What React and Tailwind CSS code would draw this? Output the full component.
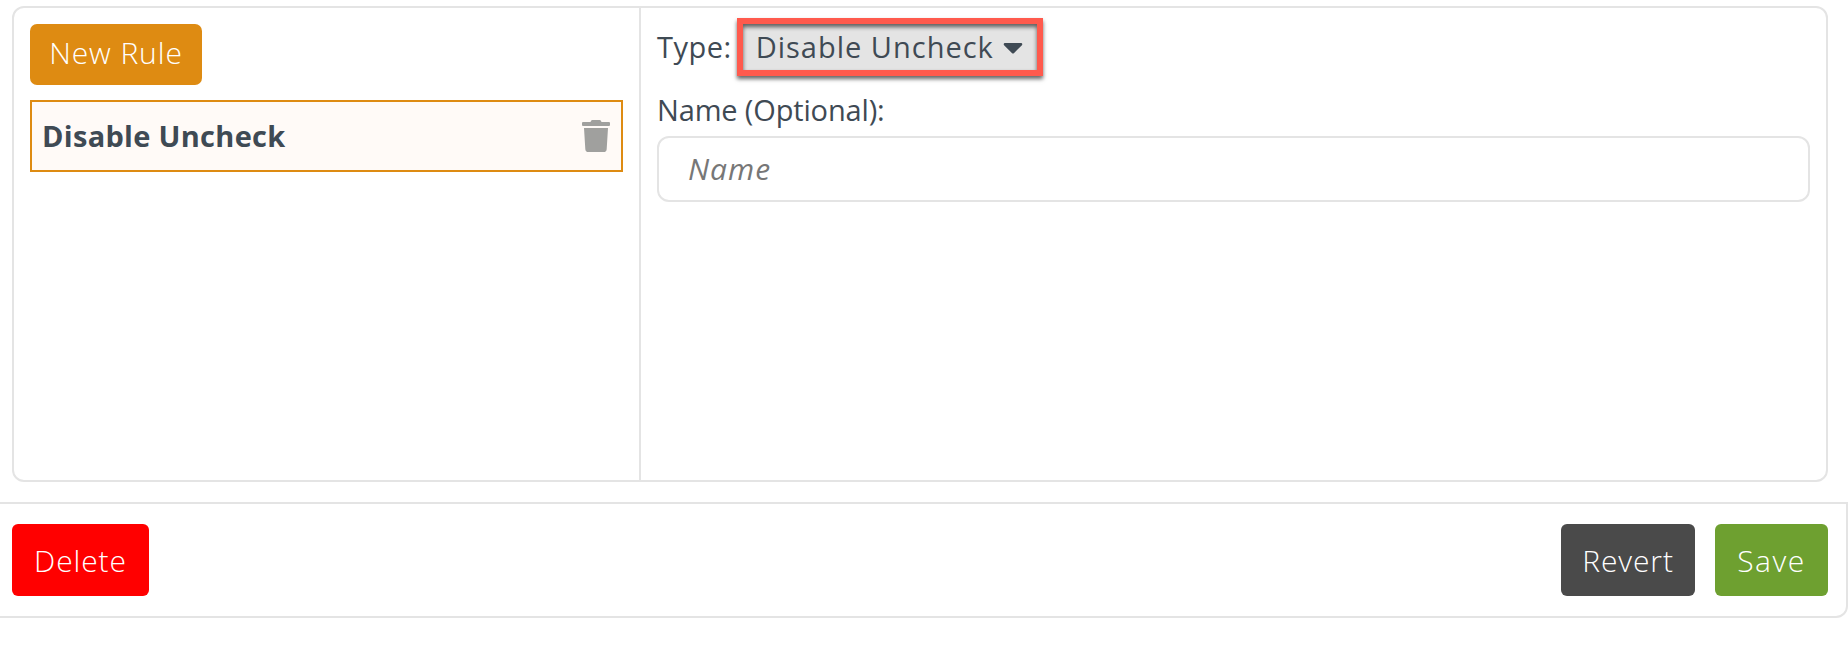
// App.jsx
import React from "react";
import { FaTrash, FaCaretDown } from "react-icons/fa";

export default function App() {
  return (
    <div className="h-[650px] w-[1848px] bg-white font-['Open_Sans','Liberation_Sans',sans-serif] text-[29px] text-[#3f4a54] overflow-hidden">
      <div className="pt-[6px] pl-[12px] pr-[20px]">
        <div className="flex h-[476px] rounded-[12px] border-2 border-[#e4e4e4]">
          <div className="w-[627px] shrink-0 border-r-2 border-[#e4e4e4] pl-[16px] pr-[16px] pt-[16px]">
            <button className="h-[61px] w-[172px] rounded-[7px] bg-[#de8b12] pb-[4px] text-[30px] font-light tracking-[0.9px] text-white">
              New Rule
            </button>
            <div className="mt-[15px] flex h-[72px] w-[593px] items-center justify-between border-2 border-[#de8b12] bg-[#fffaf7] pl-[10px] pr-[11px]">
              <span className="pb-[1px] font-bold tracking-[0.3px]">Disable Uncheck</span>
              <FaTrash className="h-[32px] w-[28px] text-[#a0a09e]" />
            </div>
          </div>
          <div className="flex-1 pl-[16px] pr-[16px] pt-[8px]">
            <div className="flex h-[62px] items-center">
              <span className="tracking-[0.5px]">Type:</span>
              <div className="ml-[5px] flex h-[58px] w-[306px] items-center border-[6px] border-[#ff5a4d] bg-[#e4e4e4] pl-[13px] shadow-[0_3px_4px_rgba(0,0,0,0.6),inset_0_3px_4px_rgba(0,0,0,0.6)]">
                <span className="tracking-[1px]">Disable Uncheck</span>
                <FaCaretDown className="ml-[9px] h-[32px] w-[20px] text-[#3f4a54]" />
              </div>
            </div>
            <div className="mt-[12px] leading-[40px] tracking-[-0.15px]">Name (Optional):</div>
            <div className="mt-[6px] flex h-[66px] items-center rounded-[12px] border-2 border-[#e4e4e4] pb-[1px] pl-[29px] text-[30px] italic tracking-[1px] text-[#777777]">
              Name
            </div>
          </div>
        </div>
      </div>
      <div className="mt-[20px] flex h-[116px] items-center justify-between rounded-br-[12px] border-y-2 border-r-2 border-[#e4e4e4] pl-[12px] pr-[18px]">
        <button className="h-[72px] w-[137px] rounded-[6px] bg-[#ff0000] text-[30px] font-light tracking-[0.9px] text-white">
          Delete
        </button>
        <div className="flex gap-[20px]">
          <button className="h-[72px] w-[134px] rounded-[6px] bg-[#4a4a4a] text-[30px] font-light tracking-[0.9px] text-white">
            Revert
          </button>
          <button className="h-[72px] w-[113px] rounded-[6px] bg-[#6ea030] text-[30px] font-light tracking-[1.5px] text-white">
            Save
          </button>
        </div>
      </div>
    </div>
  );
}
